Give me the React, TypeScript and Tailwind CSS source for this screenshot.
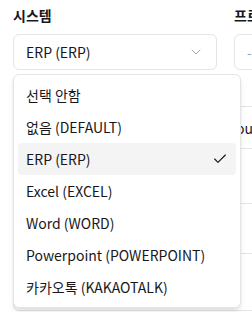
import { Check, ChevronDown } from "lucide-react";

const options = [
  { label: "선택 안함", value: "" },
  { label: "없음 (DEFAULT)", value: "DEFAULT" },
  { label: "ERP (ERP)", value: "ERP" },
  { label: "Excel (EXCEL)", value: "EXCEL" },
  { label: "Word (WORD)", value: "WORD" },
  { label: "Powerpoint (POWERPOINT)", value: "POWERPOINT" },
  { label: "카카오톡 (KAKAOTALK)", value: "KAKAOTALK" },
];

const selected = "ERP";

function SelectTrigger({ value, placeholder }: { value: string; placeholder?: boolean }) {
  return (
    <div className="flex h-9 w-full items-center justify-between rounded-md border border-[#e4e4e7] bg-white px-3 text-sm text-[#18181b]">
      <span className={placeholder ? "truncate text-[#a1a1aa]" : "truncate"}>{value}</span>
      <ChevronDown className="size-4 shrink-0 text-[#71717a] opacity-60" strokeWidth={1.5} />
    </div>
  );
}

export default function App() {
  return (
    <div
      className="h-screen w-screen overflow-hidden bg-white pl-[13px] pt-[5px] text-[#18181b]"
      style={{ fontFamily: '"Noto Sans CJK KR", "Noto Sans", sans-serif' }}
    >
      <div className="flex gap-[17px]">
        <div className="relative w-[204px] shrink-0">
          <label className="mb-[9px] block text-sm font-semibold leading-5">시스템</label>
          <SelectTrigger value="ERP (ERP)" />

          <div className="absolute left-0 top-[calc(100%+4px)] z-10 w-[228px] rounded-md border border-[#e4e4e7] bg-white p-1 shadow-md">
            {options.map((opt) => (
              <div
                key={opt.label}
                className={
                  "relative flex h-8 items-center rounded-sm px-2 text-sm " +
                  (opt.value === selected ? "bg-[#f4f4f5]" : "")
                }
              >
                <span>{opt.label}</span>
                {opt.value === selected && (
                  <Check className="absolute right-[8px] size-4" strokeWidth={1.75} />
                )}
              </div>
            ))}
          </div>
        </div>

        <div className="w-[204px] shrink-0">
          <label className="mb-[9px] block text-sm font-semibold leading-5">프로그램</label>
          <SelectTrigger value="-" placeholder />
        </div>
      </div>

      <div className="mt-[36px] w-[400px] rounded-md border border-[#e4e4e7] text-sm">
        <div className="grid h-[42px] grid-cols-[207px_1fr] items-center border-b border-[#e4e4e7]">
          <span />
          <span>Group</span>
        </div>
        <div className="h-[55px] border-b border-[#e4e4e7]" />
        <div className="h-[50px] border-b border-[#e4e4e7]" />
        <div className="h-[56px]" />
      </div>
      <div className="mt-[1px] h-10 w-[400px] rounded-md border border-[#e4e4e7]" />
    </div>
  );
}
